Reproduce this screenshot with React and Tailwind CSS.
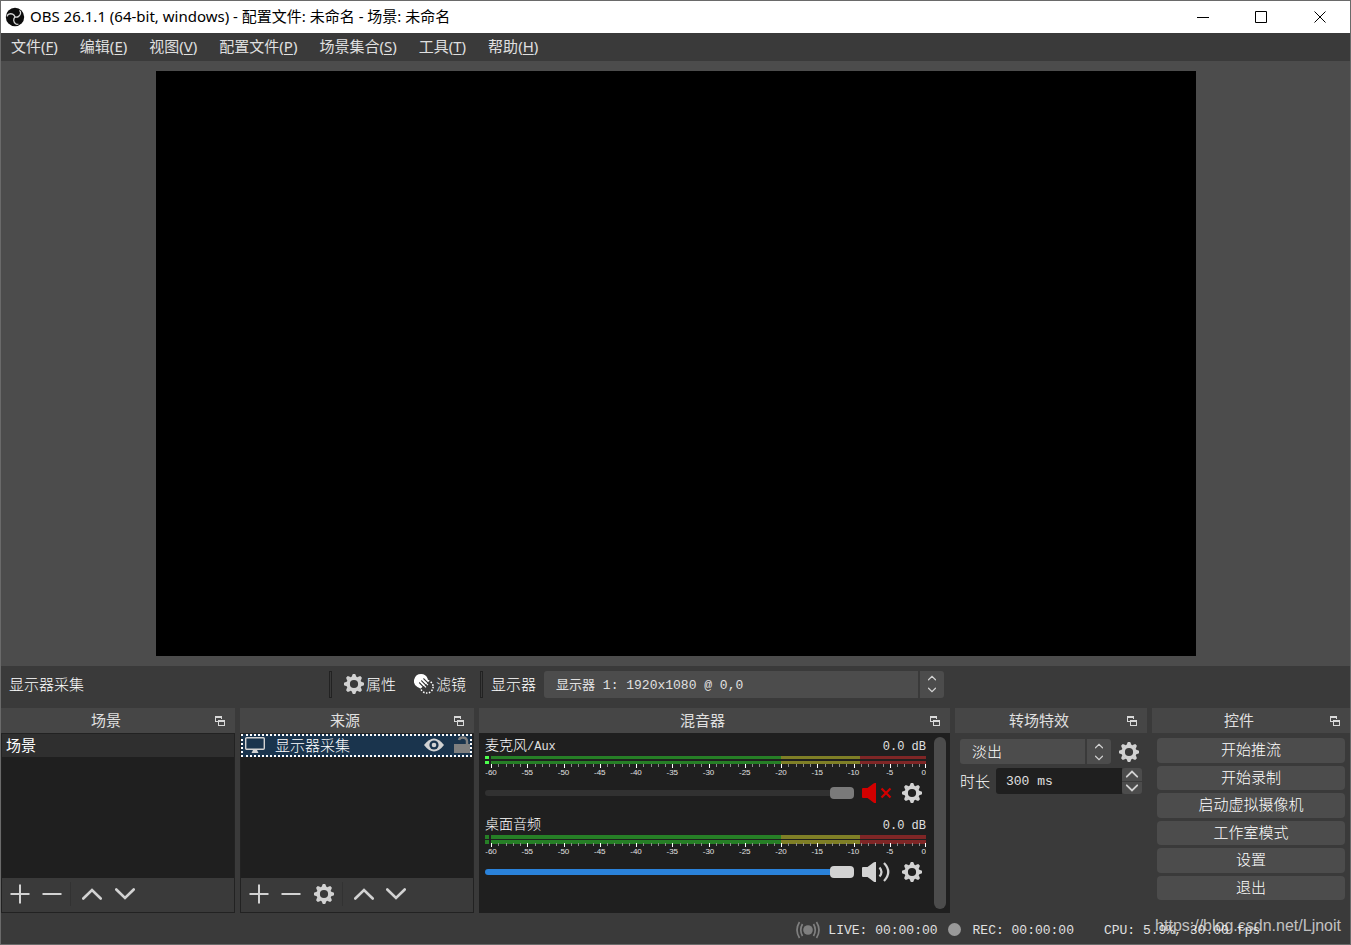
import { useState } from "react";

const sans = "font-['Noto_Sans','Noto_Sans_CJK_SC',sans-serif]";
const mono = "font-['Liberation_Mono','Noto_Sans_CJK_SC',monospace]";

const menus = [
    ["文件", "F"],
    ["编辑", "E"],
    ["视图", "V"],
    ["配置文件", "P"],
    ["场景集合", "S"],
    ["工具", "T"],
    ["帮助", "H"],
];

const controls = ["开始推流", "开始录制", "启动虚拟摄像机", "工作室模式", "设置", "退出"];

const GEAR_TEETH = [0, 45, 90, 135, 180, 225, 270, 315];

const Gear = ({ className = "text-[#d2d2d2]" }) => (
    <svg viewBox="0 0 20 20" className={`h-5 w-5 shrink-0 ${className}`} aria-hidden="true">
        <circle cx="10" cy="10" r="5.8" fill="none" stroke="currentColor" strokeWidth="3.4" />
        {GEAR_TEETH.map((a) => (
            <path key={a} d="M7.4 3.2 L8.8 0 H11.2 L12.6 3.2 Z" fill="currentColor" transform={`rotate(${a} 10 10)`} />
        ))}
    </svg>
);

const ObsLogo = () => (
    <svg viewBox="0 0 20 20" className="h-5 w-5 shrink-0" aria-hidden="true">
        <circle cx="10" cy="10" r="9.2" fill="#0c0c0c" />
        {[60, 180, 300].map((a) => (
            <path
                key={a}
                d="M10 10 C12 8 11.6 5 9.4 3.2 C8.6 2.6 7.4 2.6 6.6 3"
                fill="none"
                stroke="#d8d8d8"
                strokeWidth="1.3"
                transform={`rotate(${a} 10 10)`}
            />
        ))}
    </svg>
);

const FilterIcon = () => (
    <svg viewBox="0 0 20 20" className="h-5 w-5 shrink-0" aria-hidden="true">
        <circle cx="12.8" cy="12.8" r="6.3" fill="none" stroke="#fff" strokeWidth="1.5" strokeDasharray="1.5 1.5" />
        <path d="M7 0 A7 7 0 0 0 3.4 13 L6.5 14.5 L14.5 8 L13.6 4.5 A7 7 0 0 0 7 0 Z" fill="#fff" />
        <path d="M5.2 8.5 L11 14.5 M7.3 6.5 L13.2 12.5 M9.4 4.5 L15 10" stroke="#3a3a3a" strokeWidth="1.1" />
        <path d="M6.4 7.6 L12 13.4 M8.5 5.6 L14 11.2" stroke="#fff" strokeWidth="1.1" />
    </svg>
);

const Plus = () => (
    <svg viewBox="0 0 20 20" className="h-5 w-5" fill="none" stroke="#d2d2d2" strokeWidth="2" aria-hidden="true">
        <path d="M0.5 10 H19.5 M10 0.5 V19.5" />
    </svg>
);

const Minus = () => (
    <svg viewBox="0 0 20 20" className="h-5 w-5" fill="none" stroke="#d2d2d2" strokeWidth="2" aria-hidden="true">
        <path d="M0.5 10 H19.5" />
    </svg>
);

const Chevron = ({ down, className = "h-5 w-5", width = 2.6 }) => (
    <svg viewBox="0 0 20 20" className={className} fill="none" stroke="#d2d2d2" strokeWidth={width} strokeLinecap="round" aria-hidden="true">
        <path d={down ? "M1.3 5.5 L10 14 L18.7 5.5" : "M1.3 14.5 L10 6 L18.7 14.5"} />
    </svg>
);

const FloatIcon = () => (
    <svg viewBox="0 0 10 10" className="h-2.5 w-2.5" fill="none" stroke="#d8d8d8" shapeRendering="crispEdges" aria-hidden="true">
        <path d="M3 5.5 H0.5 V0.5 H6.5 V3 M0.5 1.5 H6.5" />
        <path d="M3.5 4.5 H9.5 V9.5 H3.5 Z M3.5 5.5 H9.5" />
    </svg>
);

const Dock = ({ title, children }) => (
    <section className="flex min-w-0 flex-col">
        <header className="flex h-[25px] items-center bg-[#464646] pr-2.5">
            <h2 className={`flex-1 pb-0.5 pr-1 text-center text-[15px] leading-5 ${sans}`}>{title}</h2>
            <button aria-label={`浮动 ${title}`}>
                <FloatIcon />
            </button>
        </header>
        {children}
    </section>
);

const Divider = ({ className }) => <div className={`w-px bg-[#323232] ${className}`} />;

const SpinArrows = () => (
    <span className="pointer-events-none absolute inset-y-0 right-0 flex w-[26px] flex-col items-center justify-center gap-1 border-l-2 border-[#3a3a3a]">
        <Chevron className="h-2 w-2" width={3} />
        <Chevron down className="h-2 w-2" width={3} />
    </span>
);

const SCALE = Array.from({ length: 61 }, (_, i) => i);

const Meter = ({ lit }) => (
    <svg viewBox="0 0 441 22" className="block w-full" aria-hidden="true">
        {[0, 5].map((y) => (
            <g key={y} shapeRendering="crispEdges">
                <rect x="0" y={y} width="4" height={lit ? 3 : 4} fill={lit ? "#4cff4c" : "#267f26"} />
                <rect x="6" y={y} width="290" height={lit ? 3 : 4} fill="#267f26" />
                <rect x="296" y={y} width="79" height={lit ? 3 : 4} fill="#7f7f26" />
                <rect x="375" y={y} width="66" height={lit ? 3 : 4} fill="#7f2626" />
            </g>
        ))}
        {SCALE.map((i) => (
            <rect
                key={i}
                x={Math.min(Math.round(6 + i * 7.25), 440)}
                y="8"
                width="1"
                height={i % 5 === 0 ? 4 : 3}
                fill={i % 5 === 0 ? "#fff" : "#8c8c8c"}
                shapeRendering="crispEdges"
            />
        ))}
        {SCALE.filter((i) => i % 5 === 0).map((i) => (
            <text
                key={i}
                x={i === 60 ? 441 : 6 + i * 7.25}
                y="19"
                fill="#e0e0e0"
                textAnchor={i === 60 ? "end" : "middle"}
                className="font-['Liberation_Sans',sans-serif] text-[8px]"
            >
                {i - 60}
            </text>
        ))}
    </svg>
);

const Speaker = ({ muted }) => (
    <svg viewBox="0 0 30 20" className="h-5 w-[30px]" aria-hidden="true">
        <path
            d="M1 5 H5.5 L11.5 0.5 Q12 0 13 0 H14 V20 H13 Q12 20 11.5 19.5 L5.5 15 H1 Q0 15 0 14 V6 Q0 5 1 5 Z"
            fill={muted ? "#d20000" : "#d2d2d2"}
        />
        {muted ? (
            <path d="M19.5 5.5 L28.5 14.5 M28.5 5.5 L19.5 14.5" stroke="#d20000" strokeWidth="2.2" />
        ) : (
            <path d="M17.5 5.5 Q21.5 10 17.5 14.5 M22 1 Q30.5 10 22 19" fill="none" stroke="#d2d2d2" strokeWidth="2.2" />
        )}
    </svg>
);

const Channel = ({ name, latin, startMuted }) => {
    const [muted, setMuted] = useState(startMuted);

    return (
        <div className="h-[79px]">
            <div className={`flex h-[19px] items-center justify-between leading-4 ${mono}`}>
                <span>
                    <span className="text-[14px] font-light text-white">{name}</span>
                    <span className="text-[12px]">{latin}</span>
                </span>
                <span className="text-[12px]">0.0 dB</span>
            </div>
            <Meter lit={startMuted} />
            <div className="flex h-[30px] items-center">
                <input
                    type="range"
                    defaultValue="100"
                    aria-label={`${name}${latin} 音量`}
                    className={`h-1.5 min-w-0 flex-1 appearance-none rounded-full [&::-webkit-slider-thumb]:h-3 [&::-webkit-slider-thumb]:w-6 [&::-webkit-slider-thumb]:appearance-none [&::-webkit-slider-thumb]:rounded-[4px] ${
                        muted
                            ? "bg-[#313131] [&::-webkit-slider-thumb]:bg-[#7a7a7a]"
                            : "bg-[#2a82da] [&::-webkit-slider-thumb]:bg-[#d2d2d2]"
                    }`}
                />
                <button className="ml-2" aria-label="静音" onClick={() => setMuted(!muted)}>
                    <Speaker muted={muted} />
                </button>
                <button className="ml-2.5 mr-1" aria-label="音频设置">
                    <Gear />
                </button>
            </div>
        </div>
    );
};

const TitleBar = () => (
    <div className={`flex h-8 shrink-0 items-center bg-white pl-1 text-black ${sans}`}>
        <ObsLogo />
        <h1 className="ml-[5px] flex-1 pb-0.5 text-[15px] leading-5">OBS 26.1.1 (64-bit, windows) - 配置文件: 未命名 - 场景: 未命名</h1>
        <div className="flex h-full">
            {[
                ["最小化", "M0 6.5 H12"],
                ["最大化", "M0.5 0.5 H11.5 V11.5 H0.5 Z"],
                ["关闭", "M0.5 0.5 L11.5 11.5 M11.5 0.5 L0.5 11.5"],
            ].map(([label, d]) => (
                <button key={label} aria-label={label} className="flex w-[58px] items-center justify-center last:w-[60px]">
                    <svg viewBox="0 0 12 12" className="h-3 w-3" fill="none" stroke="#000">
                        <path d={d} />
                    </svg>
                </button>
            ))}
        </div>
    </div>
);

const ContextBar = () => (
    <div className="flex h-[42px] shrink-0 items-center pb-1.5 pl-2 text-[15px]">
        <span className="w-80 font-light text-white">显示器采集</span>
        <div className="h-[27px] w-[3px] border border-[#222] bg-[#3a3a3a]" />
        <button className="ml-3 flex items-center gap-0.5 font-light text-white">
            <Gear />
            属性
        </button>
        <button className="ml-[18px] flex items-center gap-0.5 font-light text-white">
            <FilterIcon />
            滤镜
        </button>
        <div className="ml-3.5 h-[27px] w-[3px] border border-[#222] bg-[#3a3a3a]" />
        <label htmlFor="display" className="ml-2 font-light text-white">
            显示器
        </label>
        <div className="relative ml-2 w-[400px]">
            <select id="display" className={`block h-[27px] w-full appearance-none rounded-[3px] bg-[#4c4c4c] pl-3 pt-[3px] text-[13px] ${mono}`}>
                <option>显示器 1: 1920x1080 @ 0,0</option>
            </select>
            <SpinArrows />
        </div>
    </div>
);

const Scenes = () => (
    <Dock title="场景">
        <div className="flex flex-1 flex-col border border-[#222] bg-[#1f1f1f]">
            <ul className="flex-1">
                <li className={`h-[23px] bg-[#2f2f2f] pl-1 text-[15px] leading-[22px] text-white ${sans}`}>场景</li>
            </ul>
            <div className="flex h-[34px] items-center bg-[#3a3a3a] pb-0.5 pl-2">
                <button aria-label="添加场景"><Plus /></button>
                <button className="ml-3" aria-label="移除场景"><Minus /></button>
                <Divider className="ml-2 h-6" />
                <button className="ml-[11px]" aria-label="上移"><Chevron /></button>
                <button className="ml-[13px]" aria-label="下移"><Chevron down /></button>
            </div>
        </div>
    </Dock>
);

const Sources = () => (
    <Dock title="来源">
        <div className="flex flex-1 flex-col border border-[#222] bg-[#1f1f1f]">
            <ul className="flex-1">
                <li className="mr-px flex h-[23px] items-center border-2 border-dotted border-white bg-[#1a344d] pb-0.5 pl-0.5 text-[15px] text-white">
                    <svg viewBox="0 0 20 16" className="h-4 w-5" aria-hidden="true">
                        <rect x="0.7" y="0.7" width="18.6" height="11.6" rx="1" fill="none" stroke="#d2d2d2" strokeWidth="1.4" />
                        <path d="M8 13 H12 L13.5 16 H6.5 Z" fill="#d2d2d2" />
                    </svg>
                    <span className="ml-2.5 flex-1 font-light leading-4">显示器采集</span>
                    <button aria-label="可见">
                        <svg viewBox="0 0 20 14" className="h-3.5 w-5">
                            <path d="M0 7 Q10 -6 20 7 Q10 20 0 7 Z" fill="#d2d2d2" />
                            <circle cx="10" cy="7" r="4.6" fill="#1a344d" />
                            <circle cx="10" cy="7" r="2.3" fill="#d2d2d2" />
                        </svg>
                    </button>
                    <button className="ml-2.5" aria-label="锁定">
                        <svg viewBox="0 0 16 18" className="h-[18px] w-4">
                            <rect x="0" y="8" width="16" height="9" fill="#7f7f7f" />
                            <path d="M5 4 Q5.5 1.5 8.5 1.5 Q13 1.5 13 5.5 V8" fill="none" stroke="#7f7f7f" strokeWidth="2.4" />
                        </svg>
                    </button>
                </li>
            </ul>
            <div className="flex h-[34px] items-center bg-[#3a3a3a] pb-0.5 pl-2">
                <button aria-label="添加来源"><Plus /></button>
                <button className="ml-3" aria-label="移除来源"><Minus /></button>
                <button className="ml-[13px]" aria-label="来源属性"><Gear /></button>
                <Divider className="ml-2 h-6" />
                <button className="ml-[11px]" aria-label="上移"><Chevron /></button>
                <button className="ml-3" aria-label="下移"><Chevron down /></button>
            </div>
        </div>
    </Dock>
);

const Mixer = () => (
    <Dock title="混音器">
        <div className="flex flex-1 bg-[#1f1f1f] pl-1.5 pr-1">
            <div className="min-w-0 flex-1 pt-1">
                <Channel name="麦克风" latin="/Aux" startMuted />
                <Channel name="桌面音频" latin="" startMuted={false} />
            </div>
            <div className="my-1 ml-2 w-3 rounded-full bg-[#4c4c4c]" />
        </div>
    </Dock>
);

const Transitions = () => (
    <Dock title="转场特效">
        <div className="flex flex-col gap-1 px-[5px] py-1.5 text-[15px]">
            <div className="flex items-center">
                <div className="relative flex-1">
                    <select aria-label="转场" className="block h-[25px] w-full appearance-none rounded-[3px] bg-[#4c4c4c] pl-3 font-light text-white">
                        <option>淡出</option>
                    </select>
                    <SpinArrows />
                </div>
                <button className="ml-2 mr-[3px]" aria-label="转场属性">
                    <Gear />
                </button>
            </div>
            <div className="flex h-[26px] items-center">
                <label htmlFor="duration" className="font-light text-white">
                    时长
                </label>
                <input
                    id="duration"
                    defaultValue="300 ms"
                    className={`ml-1.5 h-full min-w-0 flex-1 rounded-l-[3px] bg-[#1f1f1f] pl-2.5 text-[13px] ${mono}`}
                />
                <div className="flex h-full w-5 flex-col gap-px">
                    <button aria-label="增加" className="flex flex-1 items-center justify-center rounded-t-[3px] bg-[#4c4c4c]">
                        <Chevron className="h-3 w-3.5" width={3} />
                    </button>
                    <button aria-label="减少" className="flex flex-1 items-center justify-center rounded-b-[3px] bg-[#4c4c4c]">
                        <Chevron down className="h-3 w-3.5" width={3} />
                    </button>
                </div>
            </div>
        </div>
    </Dock>
);

const Controls = () => (
    <Dock title="控件">
        <div className="flex h-[172px] flex-col gap-[3px] p-[5px]">
            {controls.map((label) => (
                <button key={label} className="flex flex-1 items-center justify-center rounded-[4px] bg-[#4c4c4c] pb-0.5 text-[15px] font-light leading-5 text-white">
                    {label}
                </button>
            ))}
        </div>
    </Dock>
);

const StatusBar = () => (
    <footer className={`relative flex h-[31px] shrink-0 items-center justify-end pr-[90px] pt-0.5 text-[13px] ${mono}`}>
        <svg viewBox="0 0 24 18" className="h-[18px] w-6" fill="none" stroke="#7f7f7f" strokeWidth="1.7" aria-hidden="true">
            <circle cx="12" cy="9" r="4.8" fill="#7f7f7f" stroke="none" />
            <path d="M6.5 3 Q3 9 6.5 15 M3.5 1 Q-1.5 9 3.5 17 M17.5 3 Q21 9 17.5 15 M20.5 1 Q25.5 9 20.5 17" />
        </svg>
        <span className="ml-2 pt-0.5">LIVE: 00:00:00</span>
        <span className="ml-2.5 h-[13px] w-[13px] rounded-full bg-[#999]" />
        <span className="ml-3 pt-0.5">REC: 00:00:00</span>
        <span className="ml-[30px] pt-0.5">CPU: 5.9%, 30.00 fps</span>
        <span className="absolute bottom-2 right-[9px] font-['Liberation_Sans',sans-serif] text-[16px] leading-5 text-white/70">
            https://blog.csdn.net/Ljnoit
        </span>
    </footer>
);

const App = () => {
    return (
        <div className="flex h-screen flex-col border border-[#6a6a6a] bg-[#3a3a3a] font-['Noto_Sans_CJK_SC',sans-serif] text-[#e0e0e0]">
            <TitleBar />
            <nav className={`flex h-7 shrink-0 items-center gap-[22px] pb-0.5 pl-2.5 text-[15px] leading-5 ${sans}`}>
                {menus.map(([name, key]) => (
                    <button key={key}>
                        {name}(<span className="underline underline-offset-2">{key}</span>)
                    </button>
                ))}
            </nav>
            <main className="flex min-h-0 flex-1 justify-center bg-[#4c4c4c] py-2.5">
                <div className="aspect-video h-full bg-black" />
            </main>
            <ContextBar />
            <div className="grid h-[205px] shrink-0 grid-cols-[234fr_234fr_471fr_192fr_198fr] gap-[5px]">
                <Scenes />
                <Sources />
                <Mixer />
                <Transitions />
                <Controls />
            </div>
            <StatusBar />
        </div>
    );
};

export default App;
